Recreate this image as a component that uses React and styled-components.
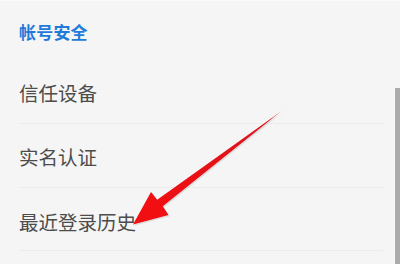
import styled, { createGlobalStyle } from "styled-components"

const Global = createGlobalStyle`
    html, body {
        margin: 0;
        padding: 0;
        background: #f5f5f5;
    }
`

const Page = styled.div`
    position: relative;
    width: 400px;
    height: 264px;
    overflow: hidden;
    background: #f5f5f5;
    border-top: 1px solid #fbfbfb;
    box-sizing: border-box;
    font-family: "Noto Sans CJK SC", "Noto Sans", sans-serif;
`

const SectionHead = styled.div`
    height: 60px;
    display: flex;
    align-items: center;
    padding-left: 19px;
    color: #1f7ad9;
    font-size: 17px;
    font-weight: 700;
    letter-spacing: 0.2px;
`

const List = styled.ul`
    margin: 0;
    padding: 0;
    list-style: none;
`

const Row = styled.li`
    height: ${p => p.$h}px;
    margin: 0 17px 0 19px;
    display: flex;
    align-items: center;
    border-bottom: 1px solid #ebebeb;
    color: #4c4c4c;
    font-size: 19.5px;
    padding-top: ${p => p.$shift || 0}px;
    box-sizing: border-box;
`

const ScrollThumb = styled.div`
    position: absolute;
    right: 0;
    top: 87px;
    bottom: 0;
    width: 5px;
    background: #ababab;
    border-left: 1px solid #fafafa;
`

const Arrow = styled.svg`
    position: absolute;
    left: 0;
    top: 0;
    width: 400px;
    height: 264px;
    pointer-events: none;
`

const items = [
    { label: "信任设备", h: 63, shift: 1 },
    { label: "实名认证", h: 64, shift: 1 },
    { label: "最近登录历史", h: 63, shift: 4 },
]

export default function App () {
    return (
        <>
            <Global />
            <Page>
                <SectionHead>帐号安全</SectionHead>
                <List>
                    {items.map(it => (
                        <Row key={it.label} $h={it.h} $shift={it.shift}>{it.label}</Row>
                    ))}
                </List>
                <ScrollThumb />
                <Arrow viewBox="0 0 400 264">
                    <defs>
                        <linearGradient id="fade" x1="285" y1="107" x2="150" y2="210" gradientUnits="userSpaceOnUse">
                            <stop offset="0" stopColor="#e8141b" stopOpacity="0.3" />
                            <stop offset="0.12" stopColor="#d9141b" />
                            <stop offset="1" stopColor="#f20f12" />
                        </linearGradient>
                    </defs>
                    <polygon
                        points="285,107.3 162.8,205.2 168.5,214 133,223.5 151,191 157.2,198.8 283.6,108.6"
                        fill="#b0b0b0"
                        opacity="0.35"
                        transform="translate(1.2,1.2)"
                    />
                    <polygon
                        points="285,107.3 162.8,205.2 168.5,214 133,223.5 151,191 157.2,198.8 283.6,108.6"
                        fill="url(#fade)"
                    />
                </Arrow>
            </Page>
        </>
    )
}
